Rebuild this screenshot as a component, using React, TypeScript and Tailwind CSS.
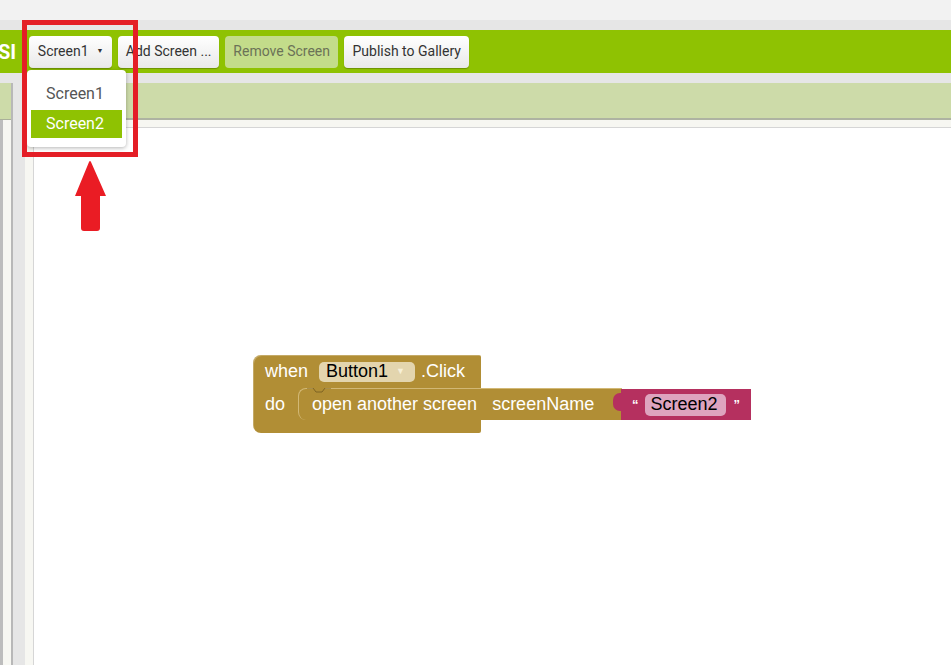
import React from 'react';

const toolbarButtons = [
    { label: 'Add Screen ...', width: 'w-[101px]', disabled: false },
    { label: 'Remove Screen', width: 'w-[113px]', disabled: true },
    { label: 'Publish to Gallery', width: 'w-[125px]', disabled: false },
];

function ToolbarButton({ label, width, disabled }: { label: string; width: string; disabled?: boolean }) {
    return (
        <div
            className={`${width} h-[32px] flex items-center justify-center rounded-[4px] text-[14px] ${disabled
                ? 'bg-[#c3dc8a] text-[#6b7257]'
                : 'bg-gradient-to-b from-white to-[#e9e9e9] text-[#333] shadow-[0_1px_1px_rgba(0,0,0,0.25)]'
                }`}
        >
            {label}
        </div>
    );
}

function ScreenDropdown() {
    return (
        <div className="absolute left-[27px] top-[70px] w-[99px] h-[77px] bg-white rounded-[4px] shadow-[0_1px_4px_rgba(0,0,0,0.3)] pt-[10px] px-[4px] flex flex-col">
            <div className="h-[28px] flex items-center pl-[15px] text-[16px] text-[#555]">Screen1</div>
            <div className="h-[28px] mt-[2px] flex items-center pl-[15px] text-[16px] text-white bg-[#8fc202]">Screen2</div>
        </div>
    );
}

function Blocks() {
    return (
        <div className="absolute left-[253px] top-[355px] font-['Liberation_Sans',Arial,sans-serif] text-[18px]">
            {/* event block */}
            <div className="w-[228px] h-[78px] bg-[#b18e35] rounded-tl-[8px] rounded-bl-[8px] rounded-tr-[2px] rounded-br-[2px] shadow-[inset_1px_1px_0_rgba(255,255,255,0.25)]">
                <div className="flex items-center h-[33px] pl-[12px] text-white">
                    <span>when</span>
                    <div className="ml-[11px] h-[20px] w-[96px] rounded-[5px] bg-[#e3d5ae] flex items-center pl-[7px] text-black">
                        <span>Button1</span>
                        <span className="ml-[8px] text-[9px] text-[#f7f0d8]">▼</span>
                    </div>
                    <span className="ml-[6px]">.Click</span>
                </div>
                <div className="flex items-center h-[32px] pl-[12px] text-white">
                    <span>do</span>
                </div>
            </div>
            {/* statement block */}
            <div className="absolute left-[45px] top-[33px] h-[32px] w-[324px] bg-[#b18e35] rounded-l-[8px] border-l border-t border-[#d2b875] flex items-center pl-[13px] text-white">
                <svg className="absolute left-[8px] top-[-1px]" width="24" height="6" viewBox="0 0 24 6">
                    <path d="M0 0 L6 0 L9 4 L15 4 L18 0 L24 0" fill="#b18e35" stroke="#7e6424" strokeWidth="1" />
                </svg>
                <span>open another screen</span>
                <span className="ml-[15px]">screenName</span>
            </div>
            {/* text block */}
            <div className="absolute left-[368px] top-[34px] h-[31px] w-[130px] bg-[#b5305f] flex items-center text-white">
                <div className="absolute left-[-8px] top-[4px] w-[11px] h-[18px] bg-[#b5305f] rounded-l-[7px]" />
                <span className="ml-[11px] text-[13px] font-bold">“</span>
                <div className="ml-[6px] h-[22px] w-[81px] rounded-[5px] bg-[#dea4bf] flex items-center pl-[6px] text-black">Screen2</div>
                <span className="ml-[8px] text-[13px] font-bold">”</span>
            </div>
        </div>
    );
}

export default function App() {
    return (
        <div className="relative w-[951px] h-[665px] overflow-hidden bg-[#e6e6e6] font-['Roboto',sans-serif] flex flex-col">
            <div className="h-[20px] bg-[#f2f2f2]" />
            <div className="h-[10px]" />
            <div className="h-[43px] bg-[#8fc202] flex items-center">
                <span className="ml-[-2px] text-white font-bold text-[20px]">SI</span>
                <div className="ml-[13px] flex items-center gap-[6px]">
                    <div className="w-[83px] h-[32px] flex items-center justify-center rounded-[4px] text-[14px] bg-gradient-to-b from-white to-[#e9e9e9] text-[#333] shadow-[0_1px_1px_rgba(0,0,0,0.25)]">
                        Screen1
                        <span className="ml-[8px] text-[7px]">▼</span>
                    </div>
                    {toolbarButtons.map((b) => (
                        <ToolbarButton key={b.label} {...b} />
                    ))}
                </div>
            </div>
            <div className="h-[10px]" />
            <div className="flex flex-1">
                {/* left panel */}
                <div className="w-[13px] flex flex-col border-r-2 border-[#b8b8b8]">
                    <div className="h-[37px] bg-[#cddba9] border-b border-[#aab09a]" />
                    <div className="flex-1 bg-[#f7f7f2] border-l-[3px] border-[#bdbdbd]" />
                </div>
                <div className="w-[12px]" />
                {/* workspace */}
                <div className="flex-1 flex flex-col">
                    <div className="h-[37px] bg-[#cddba9] border-b-2 border-[#aeb3a2]" />
                    <div className="flex-1 flex flex-col bg-[#f7f7f2]">
                        <div className="h-[8px] border-b border-[#d6d6d6]" />
                        <div className="flex flex-1">
                            <div className="w-[9px] border-r border-[#d6d6d6]" />
                            <div className="flex-1 bg-white" />
                        </div>
                    </div>
                </div>
            </div>

            <Blocks />
            <ScreenDropdown />

            {/* highlight box */}
            <div className="absolute left-[22px] top-[20px] w-[116px] h-[137px] border-[5px] border-[#e41e26]" />
            <svg className="absolute left-[74px] top-[160px]" width="34" height="72" viewBox="0 0 34 72">
                <path d="M15 2 Q16 0 17 2 L32 36 L26 36 L26 68 Q26 71 23 71 L10 71 Q7 71 7 68 L7 36 L1 36 Z" fill="#ea1c24" />
            </svg>
        </div>
    );
}
